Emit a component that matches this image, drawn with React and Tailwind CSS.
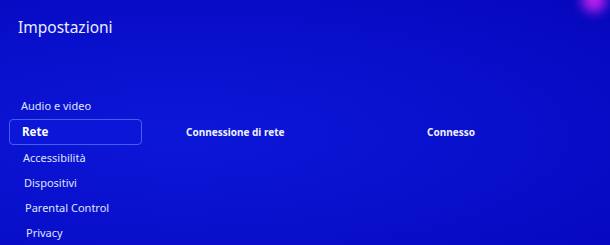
import React from "react";

const menuItems = [
  { label: "Audio e video", pl: "pl-[21px]" },
  { label: "Rete", pl: "pl-[22px]", active: true },
  { label: "Accessibilità", pl: "pl-[23px]" },
  { label: "Dispositivi", pl: "pl-[24px]" },
  { label: "Parental Control", pl: "pl-[25px]" },
  { label: "Privacy", pl: "pl-[26px]" },
];

const App = () => {
  return (
    <div className="relative w-[610px] h-[245px] overflow-hidden bg-[#0810c8] bg-[radial-gradient(ellipse_at_30%_55%,#0d17d8_0%,#0910cc_50%,#0507bc_100%)] font-['Noto_Sans','Open_Sans',sans-serif] text-white">
      {/* magenta glow, top right */}
      <div className="absolute -top-3 right-[4px] w-6 h-6 rounded-full bg-[#c020f0] blur-[6px]" />

      <h1 className="pl-[18px] pt-[16px] text-[15.5px] leading-[22px] text-[#e8ecff]">
        Impostazioni
      </h1>

      <div className="flex items-start mt-[56px]">
        <ul className="w-[142px] flex flex-col">
          {menuItems.map((item) =>
            item.active ? (
              <li
                key={item.label}
                className="ml-[9px] h-[26px] mb-[1px] flex items-center pl-[12px] rounded-[4px] border border-[#4060f0] bg-[#0c16d8] text-[11.5px] font-bold text-white"
              >
                {item.label}
              </li>
            ) : (
              <li
                key={item.label}
                className={`${item.pl} h-[25px] flex items-center text-[11px] text-[#dfe4ff]`}
              >
                {item.label}
              </li>
            )
          )}
        </ul>

        <div className="flex mt-[25px] h-[26px] items-center text-[10px] font-bold text-[#eef1ff]">
          <span className="ml-[44px] w-[241px]">Connessione di rete</span>
          <span>Connesso</span>
        </div>
      </div>
    </div>
  );
};

export default App;
